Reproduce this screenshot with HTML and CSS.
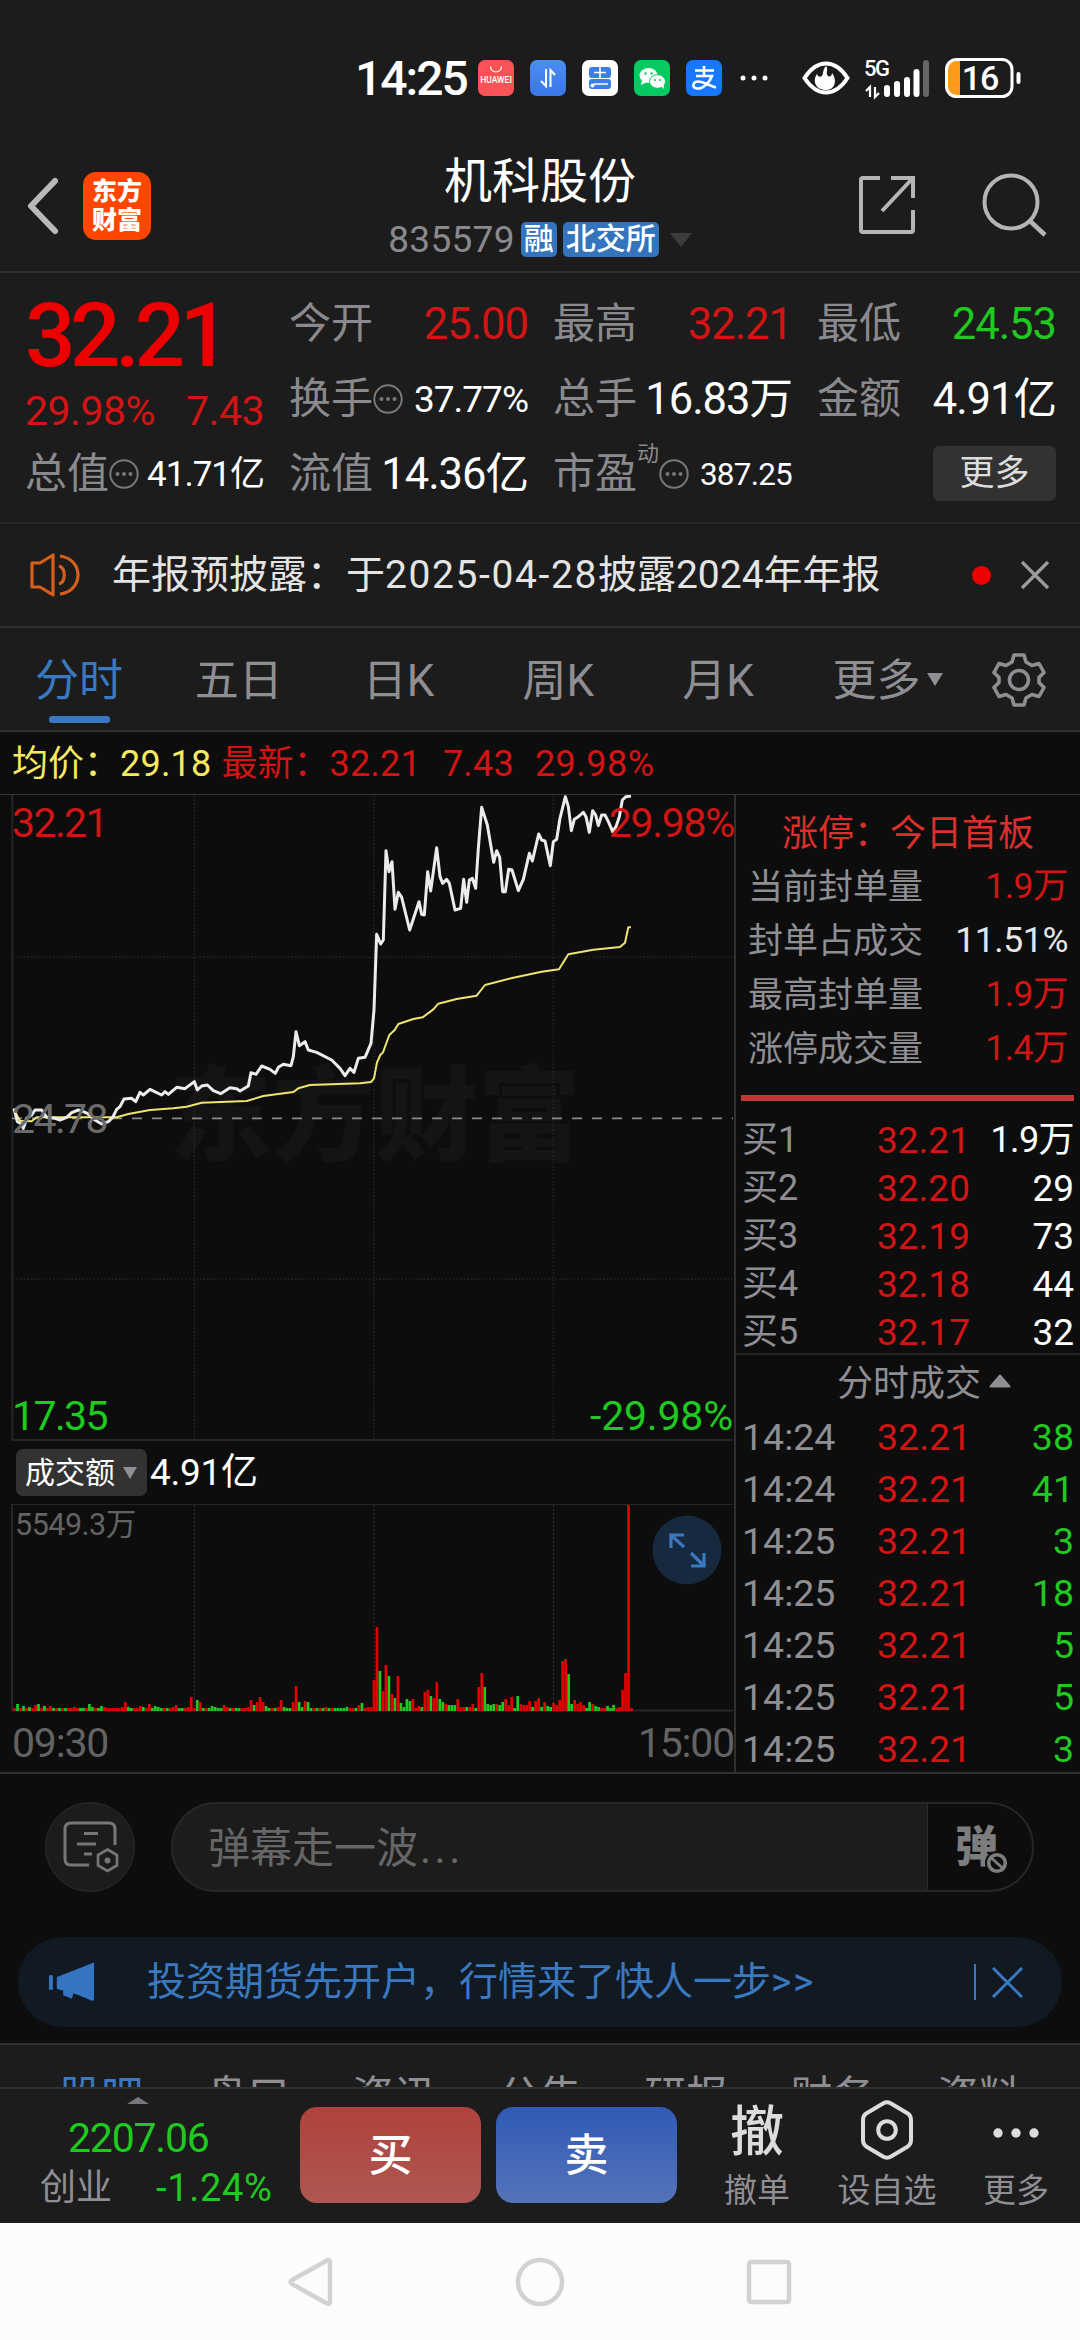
FILE: index.html
```html
<!DOCTYPE html>
<html lang="zh-CN">
<head>
<meta charset="utf-8">
<title>机科股份 835579</title>
<link rel="stylesheet" href="styles.css">
</head>
<body>
<div class="status">
  <span class="clock">14:25</span>
  <div class="apps">
    <svg class="app" viewBox="0 0 36 36"><rect width="36" height="36" rx="7" fill="#fb5257"/><path d="M12.500 6.500a5.500 5.500 0 0 0 11 0" fill="none" stroke="#fff" stroke-width="1.200"/><text x="18" y="23" class="hw">HUAWEI</text></svg>
    <svg class="app" viewBox="0 0 36 36"><defs><linearGradient id="lb" x2="0" y2="1"><stop stop-color="#4a8ff2"/><stop offset="1" stop-color="#3a76e8"/></linearGradient></defs><rect width="36" height="36" rx="7" fill="url(#lb)"/><path d="M16 9v17l-5-5M20.500 27V10l4.500 5" fill="none" stroke="#fff" stroke-width="2"/></svg>
    <svg class="app" viewBox="0 0 36 36"><rect width="36" height="36" rx="7" fill="#fff"/><rect x="7" y="7" width="22" height="11" rx="3" fill="#3b7fe6"/><rect x="7" y="19" width="22" height="10" rx="3" fill="#3b7fe6"/><path d="M18 7v11M12 12.500h12M12 24h14" stroke="#fff" stroke-width="1.600"/><circle cx="10.500" cy="25.500" r="2" fill="#fff"/></svg>
    <svg class="app" viewBox="0 0 36 36"><rect width="36" height="36" rx="7" fill="#07c962"/><ellipse cx="14.500" cy="15.500" rx="9" ry="7.600" fill="#fff"/><path d="M8 20l-1 5 5-2.500z" fill="#fff"/><ellipse cx="23.500" cy="21.500" rx="8" ry="6.800" fill="#fff" stroke="#07c962"/><path d="M27 26l2.500 3 .5-5z" fill="#fff"/><g fill="#07c962"><circle cx="11.500" cy="13.500" r="1.200"/><circle cx="17.500" cy="13.500" r="1.200"/><circle cx="21" cy="20" r="1"/><circle cx="26" cy="20" r="1"/></g></svg>
    <svg class="app" viewBox="0 0 36 36"><rect width="36" height="36" rx="7" fill="#1677ff"/><path d="M9 10.500h19M18 6v10M10 16h16c-2 6-9 13-15 12.500-6-.5-4-7 1-7 5.500 0 12 4.500 18 6" fill="none" stroke="#fff" stroke-width="2.600"/></svg>
  </div>
  <svg class="more-dots" viewBox="0 0 28 8"><g fill="#fff"><circle cx="3" cy="4" r="2.500"/><circle cx="14" cy="4" r="2.500"/><circle cx="25" cy="4" r="2.500"/></g></svg>
  <svg class="eye" viewBox="0 0 48 34"><path d="M2.500 17C9 7 16 2.500 24 2.500S39 7 45.500 17C39 27 32 31.500 24 31.500S9 27 2.500 17z" fill="none" stroke="#fff" stroke-width="4"/><path d="M24 5c3 3-1 7 2 10 1.500 1.500 4 0 4-3 5 6 4 17-6 17s-14-9-9-16c.5 2 2 3 4 2.500C22 14.500 20 9 24 5z" fill="#fff"/></svg>
  <svg class="signal" viewBox="0 0 66 38"><text x="0" y="16" class="g5">5G</text><path d="M6 37V27l-4 4M11 27v10l4-4" fill="none" stroke="#fff" stroke-width="2.200"/><g fill="#fff"><rect x="20" y="25" width="6" height="12" rx="3"/><rect x="30" y="21" width="6" height="16" rx="3"/><rect x="40" y="17" width="6" height="20" rx="3"/><rect x="49.500" y="9" width="6" height="28" rx="3"/></g><rect x="59" y="0" width="6" height="37" rx="3" fill="#666"/></svg>
  <svg class="battery" viewBox="0 0 76 40"><rect x="3" y="3" width="12" height="34" rx="5" fill="#ff9a1c"/><rect x="8" y="3" width="7" height="34" fill="#ff9a1c"/><rect x="1.500" y="1.500" width="65.500" height="37" rx="10" fill="none" stroke="#fff" stroke-width="3"/><rect x="71.500" y="14" width="4" height="12" rx="2" fill="#fff"/><text x="35" y="32" class="pct">16</text></svg>
</div>

<header class="header">
  <svg class="back" viewBox="0 0 34 60"><path d="M29 5L5 30l24 25" fill="none" stroke="#b9b9b9" stroke-width="6" stroke-linecap="round" stroke-linejoin="round"/></svg>
  <div class="brand"><span>东方</span><span>财富</span></div>
  <div class="heading">
    <h1>机科股份</h1>
    <div class="code"><span>835579</span><b>融</b><b>北交所</b><i class="tri"></i></div>
  </div>
  <svg class="share" viewBox="0 0 58 60"><path d="M22 3H5a2 2 0 0 0-2 2v50a2 2 0 0 0 2 2h48a2 2 0 0 0 2-2V35M33 3h22v20M54 4L24 36" fill="none" stroke="#b5b5b5" stroke-width="4"/></svg>
  <svg class="search" viewBox="0 0 66 66"><circle cx="29" cy="30" r="26.500" fill="none" stroke="#b5b5b5" stroke-width="4"/><path d="M48 49l15 14" stroke="#b5b5b5" stroke-width="4.500"/></svg>
</header>

<section class="quote">
  <div class="main"><div class="price">32.21</div><div class="chg"><span>29.98%</span><span>7.43</span></div></div>
  <div class="cell"><label>今开</label><em class="red">25.00</em></div>
  <div class="cell"><label>最高</label><em class="red">32.21</em></div>
  <div class="cell"><label>最低</label><em class="green">24.53</em></div>
  <div class="cell"><label>换手</label><svg class="tip"><use href="#tip"/></svg><em class="m">37.77%</em></div>
  <div class="cell"><label>总手</label><em>16.83万</em></div>
  <div class="cell"><label>金额</label><em>4.91亿</em></div>
  <div class="cell"><label>总值</label><svg class="tip"><use href="#tip"/></svg><em class="s">41.71亿</em></div>
  <div class="cell"><label>流值</label><em>14.36亿</em></div>
  <div class="cell"><label>市盈</label><sup>动</sup><svg class="tip pe"><use href="#tip"/></svg><em class="xs">387.25</em></div>
  <div class="cell end"><button class="more-btn">更多</button></div>
</section>

<section class="notice">
  <svg class="horn" viewBox="0 0 52 44"><g fill="none" stroke="#d6601a" stroke-width="3.200" stroke-linejoin="round"><path d="M2 10h8L23 2v40L10 34H2z"/><path d="M29 13c7 2 7 16 0 18M30 3c24 3 24 35 0 38"/></g></svg>
  <p>年报预披露：于<span class="date">2025-04-28</span>披露2024年年报</p>
  <i class="dot"></i>
  <svg class="x" viewBox="0 0 30 30"><path d="M2 2l26 26M28 2L2 28" stroke="#9b9b9b" stroke-width="3.200"/></svg>
</section>

<nav class="tabs">
  <a class="on">分时</a><a>五日</a><a>日K</a><a>周K</a><a>月K</a>
  <a class="more">更多<i class="tri"></i></a>
  <svg class="gear" viewBox="0 0 54 54"><g fill="none" stroke="#8e8e93" stroke-width="3.600" stroke-linejoin="round"><path d="M22 2h10l2 7 6 3.500 7-2 5 9-5 5v5l5 5-5 9-7-2-6 3.500-2 7H22l-2-7-6-3.500-7 2-5-9 5-5v-5l-5-5 5-9 7 2 6-3.500z"/><circle cx="27" cy="27" r="9.500"/></g></svg>
</nav>

<div class="info"><span class="avg">均价：</span><span class="avg n1">29.18</span><span class="n2">最新：</span><span class="n3">32.21</span><span class="n4">7.43</span><span class="n5">29.98%</span></div>

<section class="board">
  <div class="left">
    <div class="kline">
      <div class="mark">东方财富</div>
      <svg class="plot" viewBox="0 45 2205 1938">
        <g fill="none" stroke="#303030" stroke-width="3" stroke-dasharray="5 6"><path d="M583 47v1935M1122 47v1935M1660 47v1935M38 531h2161M38 1497h2161"/></g>
        <path d="M37 45v1935h2161" fill="none" stroke="#262626" stroke-width="6"/>
        <path d="M36 1015h2163" stroke="#8a8a8a" stroke-width="5" stroke-dasharray="30 30"/>
        <polyline fill="none" stroke="#ede56f" stroke-width="6" stroke-linejoin="round" points="42,990 60,1022 95,1024 110,1012 350,1012 385,1002 450,990 520,985 560,980 605,968 740,963 790,948 880,936 895,925 930,915 1080,910 1113,906 1122,895 1131,847 1141,825 1149,817 1168,765 1184,750 1195,732 1240,717 1268,712 1300,688 1315,671 1370,657 1430,647 1455,615 1540,593 1625,575 1677,568 1705,523 1780,509 1860,501 1875,488 1885,442 1893,442"/>
        <polyline fill="none" stroke="#ececec" stroke-width="9" stroke-linejoin="round" points="42,985 52,1025 62,1030 70,1045 80,1015 95,1005 105,990 125,990 140,1012 165,1015 180,1020 200,1012 215,998 235,990 250,995 262,1000 285,1020 305,1032 325,1025 338,1012 350,988 360,980 372,957 395,955 407,965 420,937 430,945 450,928 485,945 495,935 505,943 530,922 555,926 583,905 592,930 605,918 622,915 640,932 662,941 690,923 710,926 720,933 745,918 753,878 768,883 785,858 810,868 826,880 835,862 850,853 873,857 880,830 888,755 898,797 915,785 925,810 950,817 995,840 1020,865 1035,887 1050,865 1062,877 1075,835 1095,832 1113,790 1122,690 1130,463 1142,492 1150,480 1158,212 1167,275 1176,245 1185,388 1195,337 1205,352 1229,450 1257,365 1265,403 1273,405 1283,275 1292,333 1310,203 1320,290 1328,310 1340,298 1348,310 1365,390 1382,385 1391,298 1400,367 1408,300 1417,295 1427,325 1435,205 1445,82 1462,135 1481,247 1490,212 1499,232 1508,335 1516,335 1526,268 1536,270 1555,332 1570,298 1588,220 1597,243 1616,162 1625,180 1635,183 1651,257 1660,185 1670,178 1680,115 1696,50 1705,80 1714,152 1723,118 1735,110 1750,97 1758,110 1768,157 1778,92 1787,105 1795,137 1805,105 1815,105 1825,125 1838,155 1848,140 1858,110 1867,60 1878,50 1893,48"/>
      </svg>
      <span class="lab tl red">32.21</span><span class="lab tr red">29.98%</span>
      <span class="lab ml">24.78</span>
      <span class="lab bl green">17.35</span><span class="lab br green">-29.98%</span>
    </div>
    <div class="volhead"><button>成交额<i class="tri"></i></button><span>4.91亿</span></div>
    <div class="vol">
      <svg id="volume" class="plot" viewBox="0 0 735 208">
        <path d="M194.500 1v206M374 1v206M553.500 1v206" stroke="#303030" stroke-dasharray="2 2"/>
        <path d="M12 .5h721" stroke="#262626"/><path d="M12 0v206.500h721" fill="none" stroke="#262626" stroke-width="2"/>
      </svg>
      <span class="max">5549.3万</span>
      <svg class="expand" viewBox="0 0 70 70"><circle cx="35" cy="35" r="34.500" fill="#16293f"/><path d="M19 33V20h13M20 21l12 11M52 38v13H39M51 50L39 38" fill="none" stroke="#3a78c0" stroke-width="3.200"/></svg>
    </div>
    <div class="axis"><span>09:30</span><span>15:00</span></div>
  </div>
  <aside class="right">
    <h2>涨停：今日首板</h2>
    <ul class="seal">
      <li><span>当前封单量</span><em class="red">1.9万</em></li>
      <li><span>封单占成交</span><em class="pc">11.51%</em></li>
      <li><span>最高封单量</span><em class="red">1.9万</em></li>
      <li><span>涨停成交量</span><em class="red">1.4万</em></li>
    </ul>
    <div class="bar"></div>
    <ul class="bids">
      <li><span>买1</span><b>32.21</b><em class="w">1.9万</em></li>
      <li><span>买2</span><b>32.20</b><em>29</em></li>
      <li><span>买3</span><b>32.19</b><em>73</em></li>
      <li><span>买4</span><b>32.18</b><em>44</em></li>
      <li><span>买5</span><b>32.17</b><em>32</em></li>
    </ul>
    <h3>分时成交<svg viewBox="0 0 22 14"><path d="M11 1.500L20.500 12.500h-19z" fill="#8e8e93" stroke="#8e8e93" stroke-width="2" stroke-linejoin="round"/></svg></h3>
    <ul class="ticks">
      <li><span>14:24</span><b>32.21</b><em>38</em></li>
      <li><span>14:24</span><b>32.21</b><em>41</em></li>
      <li><span>14:25</span><b>32.21</b><em>3</em></li>
      <li><span>14:25</span><b>32.21</b><em>18</em></li>
      <li><span>14:25</span><b>32.21</b><em>5</em></li>
      <li><span>14:25</span><b>32.21</b><em>5</em></li>
      <li><span>14:25</span><b>32.21</b><em>3</em></li>
    </ul>
  </aside>
</section>

<section class="chat">
  <div class="row">
    <div class="round"><svg viewBox="0 0 60 52"><g fill="none" stroke="#777" stroke-width="3"><path d="M29 44H11q-6 0-6-6V8q0-6 6-6h38q6 0 6 6v16"/><path d="M24 12.500h14M17 23h19M24 33h8"/><path d="M47.500 28.500l9.500 5.500v10.500l-9.500 5.500-9.500-5.500V34z" stroke-width="2.600"/></g><circle cx="47.500" cy="39.500" r="3" fill="#777"/></svg></div>
    <div class="field"><p>弹幕走一波<span>...</span></p><div class="toggle">弹<svg viewBox="0 0 24 24"><circle cx="12" cy="12" r="8.500" fill="#0d0d0d" stroke="#0d0d0d" stroke-width="7"/><circle cx="12" cy="12" r="8.300" fill="none" stroke="#7d7d7d" stroke-width="3.600"/><path d="M6.500 7l11 10" stroke="#7d7d7d" stroke-width="3"/></svg></div></div>
  </div>
  <div class="ad">
    <svg class="mega" viewBox="0 0 48 40"><path d="M1 13h4v15H1zM9 15L47 0v39h-3l-5-2.500-13-5-1.500 5.500-9-3.500V29L9 27z" fill="#3474c1"/></svg>
    <p>投资期货先开户，行情来了快人一步<span>&gt;&gt;</span></p>
    <i></i>
    <svg class="adx" viewBox="0 0 32 32"><path d="M1 1l30 30M31 1L1 31" stroke="#3a78c0" stroke-width="3"/></svg>
  </div>
</section>

<nav class="sub"><a class="on">股吧</a><a>盘口</a><a>资讯</a><a>公告</a><a>研报</a><a>财务</a><a>资料</a></nav>

<footer class="dock">
  <div class="index">
    <svg viewBox="0 0 22 7"><path d="M11 0l11 7H0z" fill="#77777b"/></svg>
    <strong>2207.06</strong>
    <div><span>创业</span><em>-1.24%</em></div>
  </div>
  <button class="buy">买</button>
  <button class="sell">卖</button>
  <div class="act a1"><div class="ic che">撤</div><span>撤单</span></div>
  <div class="act a2"><div class="ic"><svg width="54" height="60" viewBox="0 0 54 60"><path d="M23 3.500q4-2.300 8 0l16 9.500q4 2.300 4 7v20q0 4.500-4 7L31 56.500q-4 2.300-8 0L7 47q-4-2.500-4-7V20q0-4.700 4-7z" fill="none" stroke="#dcdcdc" stroke-width="4"/><circle cx="27" cy="30" r="8.800" fill="none" stroke="#dcdcdc" stroke-width="4"/></svg></div><span>设自选</span></div>
  <div class="act a3"><div class="ic"><svg width="46" height="54" viewBox="0 0 46 54"><g fill="#dcdcdc"><circle cx="5" cy="30" r="4.700"/><circle cx="23" cy="30" r="4.700"/><circle cx="41" cy="30" r="4.700"/></g></svg></div><span>更多</span></div>
</footer>

<div class="sysnav">
  <svg viewBox="0 0 50 50"><path d="M41 3.500q3-1.500 3 2v39q0 3.500-3 2L6 27q-3-2 0-4z" fill="none" stroke="#d2d2d2" stroke-width="4.500" stroke-linejoin="round"/></svg>
  <svg viewBox="0 0 50 50"><circle cx="25" cy="25" r="22" fill="none" stroke="#d2d2d2" stroke-width="4.500"/></svg>
  <svg viewBox="0 0 50 50"><rect x="5" y="5" width="40" height="40" rx="2" fill="none" stroke="#d2d2d2" stroke-width="4.500"/></svg>
</div>

<svg class="defs"><symbol id="tip" viewBox="0 0 30 30"><circle cx="15" cy="15" r="13.700" fill="none" stroke="#77777b" stroke-width="2"/><g fill="#77777b"><circle cx="8.500" cy="15" r="2"/><circle cx="15" cy="15" r="2"/><circle cx="21.500" cy="15" r="2"/></g></symbol></svg>
<script src="volume.js"></script>
</body>
</html>
```
FILE: volume.js
```js
// One entry per minute since 09:30: colour letter followed by bar height in pixels.
const minutes = `r3 g7 r3 g5 r3 g4 r3 r6 g7 r3 g5 r3 r5 g3 r3 g3 r3 g3 r3 r3 r4 r3 g3 g3 r3
g7 g4 r3 g3 g5 r4 r3 r3 r3 r3 r3 r4 r9 g4 g3 r3 r3 r5 g4 r3 r7 g3 g5 g4 g3
r3 g3 r3 r4 r6 g3 g3 r3 r4 r14 r3 g11 r9 g3 r3 g3 g5 g4 g3 g3 r6 r4 g3 r3 g3
g3 r3 r3 r4 r11 g6 r9 r14 r9 g5 g3 r3 g3 r4 r11 g4 g3 g3 r9 r25 g9 g4 r10 g9 g3
r3 g3 r3 g3 r4 g3 r3 g3 g3 g3 g3 g4 r3 r3 g3 r6 g8 r3 r4 r4 r31 r84 g40 r20 r46
g35 r17 g13 r35 g8 g4 g12 g10 r12 r3 r5 g4 r19 r21 g15 r13 r29 g12 g9 r7 g6 g6 g6 r12 r4
r4 g4 r4 r7 g3 r24 r38 g24 g7 g6 g7 r7 g6 g9 r12 r6 r14 g3 g15 r7 r6 r6 r10 g4 r10
r13 g4 r9 g5 g4 r8 r6 r11 r50 r52 g37 g7 r11 r7 r9 r6 g3 g9 r7 g5 g4 r3 r3 g5 g3
g6 r3 r4 r21 r38 r206 r3`.split(/\s+/);

const chart = document.getElementById("volume");
minutes.forEach((entry, i) => {
  const height = Number(entry.slice(1));
  const bar = document.createElementNS("http://www.w3.org/2000/svg", "rect");
  bar.setAttribute("x", 13.2 + i * 2.995);
  bar.setAttribute("y", 207 - height);
  bar.setAttribute("width", 2.7);
  bar.setAttribute("height", height);
  bar.setAttribute("class", entry[0] === "r" ? "up" : "down");
  chart.appendChild(bar);
});
```
FILE: styles.css
```css
* { box-sizing: border-box; margin: 0; padding: 0; }
body { width: 1080px; height: 2340px; overflow: hidden; background: #1c1c1c; color: #fff; font-family: Roboto, "Noto Sans CJK SC", sans-serif; line-height: 1; white-space: nowrap; }
em, i, b { font-style: normal; font-weight: 400; }
ul { list-style: none; }
svg { display: block; flex: none; }
button { border: 0; color: #fff; font-family: inherit; line-height: 1; }
.defs { display: none; }
.red { color: #d21414; }
.green { color: #1fc91f; }
.tri { display: inline-block; border: solid transparent; border-bottom: 0; border-top-color: #8e8e93; }

.status { height: 140px; padding: 0 0 0 355px; display: flex; align-items: flex-start; }
.clock { width: 123px; margin-top: 55px; font-size: 48px; font-weight: 500; letter-spacing: -2px; }
.apps { display: flex; gap: 16px; margin-top: 60px; }
.app { width: 36px; height: 36px; }
.hw { font: 500 8.5px Roboto, sans-serif; fill: #fff; text-anchor: middle; }
.more-dots { width: 28px; height: 8px; margin: 74px 0 0 18px; }
.eye { width: 48px; height: 34px; margin: 61px 0 0 34px; }
.signal { width: 66px; height: 38px; margin: 60px 0 0 14px; overflow: visible; }
.g5 { font: 500 22px Roboto, sans-serif; fill: #fff; letter-spacing: -1.500px; }
.battery { width: 76px; height: 40px; margin: 58px 0 0 15px; }
.pct { font: 500 34px Roboto, sans-serif; fill: #fff; text-anchor: middle; letter-spacing: -1px; }

.header { height: 133px; display: flex; border-bottom: 2px solid #303030; padding-left: 26px; }
.back { width: 34px; height: 60px; margin-top: 36px; }
.brand { width: 68px; height: 68px; margin: 32px 0 0 23px; border-radius: 13px; background: #ff4600; display: flex; flex-direction: column; align-items: center; justify-content: center; gap: 4px; font-size: 25px; font-weight: 900; }
.heading { width: 390px; margin-left: 194px; display: flex; flex-direction: column; align-items: center; }
h1 { font-size: 48px; font-weight: 400; margin-top: 18px; }
.code { display: flex; align-items: center; margin-top: 16px; height: 35px; font-size: 37px; color: #8a8a8e; letter-spacing: .3px; }
.code b { height: 35px; line-height: 34px; padding: 0 3px; margin-left: 6px; border-radius: 5px; background: #3374bd; color: #fff; font-size: 30px; font-weight: 500; letter-spacing: 0; }
.code .tri { border-width: 14px 11px 0; border-top-color: #3c3c3c; margin-left: 11px; }
.share { width: 58px; height: 60px; margin: 35px 0 0 123px; }
.search { width: 66px; height: 66px; margin: 32px 0 0 66px; }

.quote { height: 249px; padding: 13px 24px 0 25px; display: grid; grid-template-columns: repeat(4, 1fr); grid-template-rows: repeat(3, 75px); column-gap: 25px; }
.main { grid-row: span 2; color: #ec0000; }
.price { height: 97px; line-height: 99px; font-size: 89px; font-weight: 500; letter-spacing: -5.500px; }
.chg { height: 53px; padding-top: 8px; display: flex; justify-content: space-between; font-size: 41px; color: #d21414; letter-spacing: -.5px; }
.cell { display: flex; align-items: center; padding-top: 1px; }
.cell label { font-size: 42px; color: #8a8a8e; }
.cell em { margin-left: auto; font-size: 43.500px; letter-spacing: -1px; padding-top: 1px; }
.cell em.m { font-size: 37px; letter-spacing: -1px; }
.cell em.s { font-size: 35px; letter-spacing: -1px; }
.cell em.xs { font-size: 31.500px; letter-spacing: -.8px; }
.tip { width: 30px; height: 30px; }
.cell sup { font-size: 22px; color: #8a8a8e; align-self: flex-start; margin-top: 6px; }
.cell.end { justify-content: flex-end; }
.more-btn { width: 123px; height: 55px; margin-top: -2px; border-radius: 6px; background: #323232; color: #ddd; font-size: 35px; }

.notice { height: 106px; border-top: 2px solid #272727; border-bottom: 2px solid #303030; display: flex; align-items: center; padding-left: 30px; }
.horn { width: 52px; height: 44px; }
.notice p { width: 860px; margin-left: 30px; font-size: 39px; color: #e4e4e4; }
.date { letter-spacing: 1.600px; }
.dot { width: 19px; height: 19px; border-radius: 50%; background: #ec0000; }
.x { width: 30px; height: 30px; margin-left: 29px; }

.tabs { height: 104px; border-bottom: 2px solid #303030; display: flex; font-size: 44px; color: #8e8e93; }
.tabs a { width: 159.800px; height: 100%; padding-top: 4px; display: flex; align-items: center; justify-content: center; position: relative; left: -1px; }
.tabs .on { color: #3a78c0; }
.tabs .on::after { content: ""; position: absolute; left: 50px; bottom: 7px; width: 61px; height: 7px; border-radius: 3px; background: #3a78c0; }
.tabs .more { width: 180px; }
.tabs .tri { border-width: 13px 8px 0; margin: -3px 0 0 7px; }
.gear { width: 54px; height: 54px; margin: 25px 0 0 13px; }

.info { height: 62px; background: #0d0d0d; display: flex; align-items: center; padding: 1px 0 0 12px; font-size: 36px; color: #d21414; }
.avg { color: #f7ea62; }
.n2 { margin-left: 10px; }
.n1, .n3, .n4, .n5 { letter-spacing: .2px; }
.n4 { margin-left: 22px; }
.n5 { margin-left: 21px; letter-spacing: .5px; }

.board { height: 980px; display: flex; background: #0d0d0d; border-top: 1px solid #363636; border-bottom: 2px solid #303030; }
.left { width: 736px; border-right: 2px solid #303030; }
.kline { position: relative; height: 646px; }
.plot { position: absolute; left: 0; top: 0; width: 735px; height: 100%; }
.mark { position: absolute; left: 169px; top: 271px; font-size: 103px; font-weight: 900; color: #141414; }
.lab { position: absolute; font-size: 41px; letter-spacing: -1.600px; }
.tl { left: 12px; top: 8px; }
.tr { right: 0; top: 8px; letter-spacing: -1.300px; }
.ml { left: 12px; top: 304px; color: #6b6b6b; }
.bl { left: 12px; bottom: 4px; }
.br { right: 1px; bottom: 4px; letter-spacing: -.2px; }
.volhead { height: 63px; display: flex; align-items: center; padding-left: 16px; font-size: 37px; }
.volhead button { width: 131px; height: 47px; border-radius: 7px; background: #323232; font-size: 30px; display: flex; align-items: center; padding-left: 9px; }
.volhead .tri { border-width: 12px 7px 0; margin-left: 8px; }
.volhead span { margin-left: 3px; letter-spacing: -.3px; }
.vol { position: relative; height: 208px; }
.up { fill: #e40000; }
.down { fill: #1fc91f; }
.max { position: absolute; left: 15px; top: 6px; font-size: 30.500px; letter-spacing: -.5px; color: #636363; }
.expand { position: absolute; left: 652px; top: 11px; width: 70px; height: 70px; }
.axis { display: flex; justify-content: space-between; padding: 11px 0 0 12px; font-size: 41px; color: #636363; letter-spacing: -1.200px; }

.right { width: 344px; }
h2 { height: 64px; padding-top: 21px; text-align: center; font-size: 36px; font-weight: 400; color: #dc2f2b; }
.seal { padding: 0 12px 0 12px; }
.seal li { height: 54px; padding-top: 2px; display: flex; justify-content: space-between; align-items: center; font-size: 35px; color: #8e8e93; }
.seal em { font-size: 35.500px; letter-spacing: -.5px; }
.seal .pc { color: #e6e6e6; letter-spacing: -.4px; }
.seal .red { color: #d21414; }
.bar { width: 333px; height: 6px; margin: 20px 0 15px 5px; background: #c43635; }
.bids { height: 237px; padding: 0 6px; }
.bids li, .ticks li { height: 48px; display: grid; grid-template-columns: 135px 100px 1fr; align-items: center; font-size: 37px; }
.bids span, .ticks span { color: #8e8e93; }
.bids b, .ticks b { color: #d21414; }
.bids em, .ticks em { text-align: right; }
.bids em.w { font-size: 36px; letter-spacing: -.6px; }
.bids span { font-size: 36px; }
h3 { height: 59px; border-top: 2px solid #232323; display: flex; align-items: center; justify-content: center; gap: 8px; padding-left: 32px; font-size: 36px; font-weight: 400; color: #8e8e93; }
h3 svg { width: 22px; height: 14px; margin-top: -5px; }
.ticks { padding: 0 6px; }
.ticks li { height: 52px; font-size: 37.500px; }
.ticks em { color: #1fc91f; }

.chat { height: 269px; background: #0d0d0d; padding: 28px 18px 0; }
.row { display: flex; gap: 36px; padding-left: 27px; }
.round { width: 90px; height: 90px; border-radius: 50%; border: 1px solid #2b2b2b; background: #1c1c1c; display: flex; align-items: center; justify-content: center; }
.round svg { width: 60px; height: 52px; }
.field { width: 863px; height: 90px; border-radius: 45px; border: 2px solid #272727; background: #1c1c1c; overflow: hidden; display: flex; justify-content: space-between; align-items: center; padding-left: 35px; font-size: 42px; color: #666; }
.field p { padding-top: 4px; }
.field span { letter-spacing: 3.500px; padding-left: 2px; }
.toggle { position: relative; width: 105px; height: 100%; border-left: 1px solid #2b2b2b; background: #0d0d0d; padding: 22px 0 0 27px; font-size: 43px; font-weight: 900; color: #7d7d7d; }
.toggle svg { position: absolute; left: 57px; top: 47px; width: 24px; height: 24px; }
.ad { height: 90px; margin-top: 45px; border-radius: 45px; background: #111a23; display: flex; align-items: center; padding-left: 30px; color: #3a78c0; }
.mega { width: 47px; height: 40px; }
.ad p { width: 827px; margin-left: 52px; font-size: 39px; }
.ad span { letter-spacing: 1.500px; }
.ad i { width: 2px; height: 36px; background: #3a78c0; }
.adx { width: 31px; height: 31px; margin-left: 16px; }

.sub { height: 44px; padding: 31px 28px 0; border-top: 2px solid #303030; overflow: hidden; display: grid; grid-template-columns: repeat(7, 1fr); text-align: center; font-size: 42px; color: #8e8e93; }
.sub .on { color: #3a78c0; }

.dock { height: 136px; border-top: 2px solid #303030; background: #1c1c1c; display: flex; }
.index { width: 300px; }
.index svg { width: 22px; height: 7px; margin: 8px 0 0 127px; }
.index strong { display: block; margin: 14px 0 0 68px; font-size: 41px; font-weight: 400; color: #1fc91f; letter-spacing: -1.200px; }
.index div { display: flex; align-items: center; margin-top: 10px; padding-left: 40px; font-size: 36px; color: #8e8e93; }
.index em { margin-left: 44px; font-size: 38px; letter-spacing: .7px; color: #1fc91f; }
.buy, .sell { width: 181px; height: 96px; margin: 18px 15px 0 0; padding-top: 2px; border-radius: 17px; font-size: 44px; font-weight: 500; background: linear-gradient(#b0413c, #ad5852); }
.sell { background: linear-gradient(#305ab6, #5474b8); }
.act { display: flex; flex-direction: column; align-items: center; font-size: 33px; color: #8e8e93; }
.act .ic { height: 85px; padding-bottom: 3px; display: flex; align-items: center; color: #dcdcdc; }
.act .che { font-size: 54px; font-weight: 500; padding: 2px 0 0; }
.a1 { width: 66px; margin-left: 32px; }
.a2 { width: 100px; margin-left: 47px; }
.a3 { width: 66px; margin-left: 46px; }

.sysnav { height: 117px; background: #fcfcfc; display: flex; justify-content: center; gap: 179px; padding-top: 34px; }
.sysnav svg { width: 50px; height: 50px; }
```
